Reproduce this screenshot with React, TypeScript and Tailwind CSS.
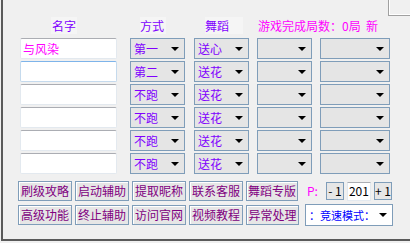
import React from 'react';

const font = { fontFamily: '"Noto Sans CJK SC", "Noto Sans", sans-serif' };

function Arrow() {
  return (
    <svg width="8" height="4" viewBox="0 0 8 4" className="shrink-0">
      <polygon points="0,0 8,0 4,4" fill="#000" />
    </svg>
  );
}

function Combo({ value, width = 'w-[55px]' }: { value?: string; width?: string }) {
  return (
    <div className={`${width} h-[21px] flex items-center justify-between border border-[#7f9db9] bg-[#e5e5e5] pl-[3px] pr-[5px]`}>
      <span className="text-[12px] leading-[14px] text-[#8000ff]">{value ?? ''}</span>
      <Arrow />
    </div>
  );
}

function NameBox({ value, focused }: { value?: string; focused?: boolean }) {
  return (
    <div
      className={`w-[97px] h-[21px] flex items-center bg-white rounded-[2px] border pl-[2px] ${
        focused ? 'border-[#c5daed] border-t-[#7eb4ea]' : 'border-[#e3e9ef] border-t-[#abadb3]'
      }`}
    >
      <span className="text-[12px] leading-[14px] text-[#ff00ff]">{value ?? ''}</span>
    </div>
  );
}

function Btn({ label, w = 'w-[54px]' }: { label: string; w?: string }) {
  return (
    <button className={`${w} h-[20px] border border-[#7f9db9] bg-[#e6e6e6] shadow-[inset_1px_1px_0_#fff] flex items-center justify-center text-[12px] leading-[14px] text-[#800080]`}>
      {label}
    </button>
  );
}

const rows = [
  { name: '与风染', way: '第一', dance: '送心' },
  { name: '', way: '第二', dance: '送花', focused: true },
  { name: '', way: '不跑', dance: '送花' },
  { name: '', way: '不跑', dance: '送花' },
  { name: '', way: '不跑', dance: '送花' },
  { name: '', way: '不跑', dance: '送花' },
];

export default function App() {
  return (
    <div className="w-[410px] h-[243px] bg-[#f0f0f0] relative overflow-hidden" style={font}>
      <div className="absolute top-0 right-0 w-[22px] h-[16px] border-l border-b border-[#a0a0a0]">
        <div className="w-full h-full border-l border-b border-white" />
      </div>
      <div className="ml-[1px] h-[241px] border-l-2 border-b-2 border-[#5a5a5a] pl-[17px] pt-[19px]">
        <div className="flex h-[14px] items-center text-[12px] leading-[14px] text-[#8000ff]">
          <div className="w-[97px] pl-[31px]">
            <span className="bg-[#f5f5f5] px-[1px]">名字</span>
          </div>
          <div className="ml-[13px] w-[55px] pl-[10px]">
            <span className="bg-[#f5f5f5] pr-[2px]">方式</span>
          </div>
          <div className="ml-[9px] w-[55px] pl-[11px]">
            <span className="bg-[#f5f5f5] pr-[14px]">舞蹈</span>
          </div>
          <div className="ml-[9px] text-[#ff00ff] whitespace-pre">游戏完成局数：0局  新</div>
        </div>

        <div className="mt-[5px] flex flex-col gap-[2px]">
          {rows.map((r, i) => (
            <div key={i} className="flex h-[21px]">
              <NameBox value={r.name} focused={r.focused} />
              <div className="ml-[13px]">
                <Combo value={r.way} />
              </div>
              <div className="ml-[9px]">
                <Combo value={r.dance} />
              </div>
              <div className="ml-[8px]">
                <Combo />
              </div>
              <div className="ml-[8px]">
                <Combo width="w-[70px]" />
              </div>
            </div>
          ))}
        </div>

        <div className="-ml-[2px] mt-[7px] flex flex-col gap-[3px]">
          <div className="flex items-center gap-[3px]">
            <Btn label="刷级攻略" />
            <Btn label="启动辅助" />
            <Btn label="提取昵称" />
            <Btn label="联系客服" />
            <Btn label="舞蹈专版" w="w-[52px]" />
            <span className="ml-[6px] text-[12px] leading-[14px] text-[#ff00ff]">P:</span>
            <div className="ml-[5px] flex items-center gap-[3px]">
              <button className="w-[18px] h-[18px] border border-[#7f9db9] bg-[#e6e6e6] text-[12px] leading-[14px] text-black flex items-center justify-center whitespace-pre">- 1</button>
              <div className="w-[24px] h-[19px] bg-white border border-[#e3e9ef] border-t-[#abadb3] text-[12px] leading-[14px] text-black flex items-center justify-center">201</div>
              <button className="w-[18px] h-[18px] border border-[#7f9db9] bg-[#e6e6e6] text-[12px] leading-[14px] text-black flex items-center justify-center whitespace-pre">+ 1</button>
            </div>
          </div>
          <div className="flex items-center gap-[3px]">
            <Btn label="高级功能" />
            <Btn label="终止辅助" />
            <Btn label="访问官网" />
            <Btn label="视频教程" />
            <Btn label="异常处理" w="w-[53px]" />
            <div className="ml-[3px] w-[88px] h-[22px] bg-white border border-[#7f9db9] flex items-center justify-between pl-[3px] pr-[5px]">
              <span className="text-[11px] leading-[14px] text-[#0000ff] whitespace-nowrap">：竞速模式：</span>
              <Arrow />
            </div>
          </div>
        </div>
      </div>
    </div>
  );
}
